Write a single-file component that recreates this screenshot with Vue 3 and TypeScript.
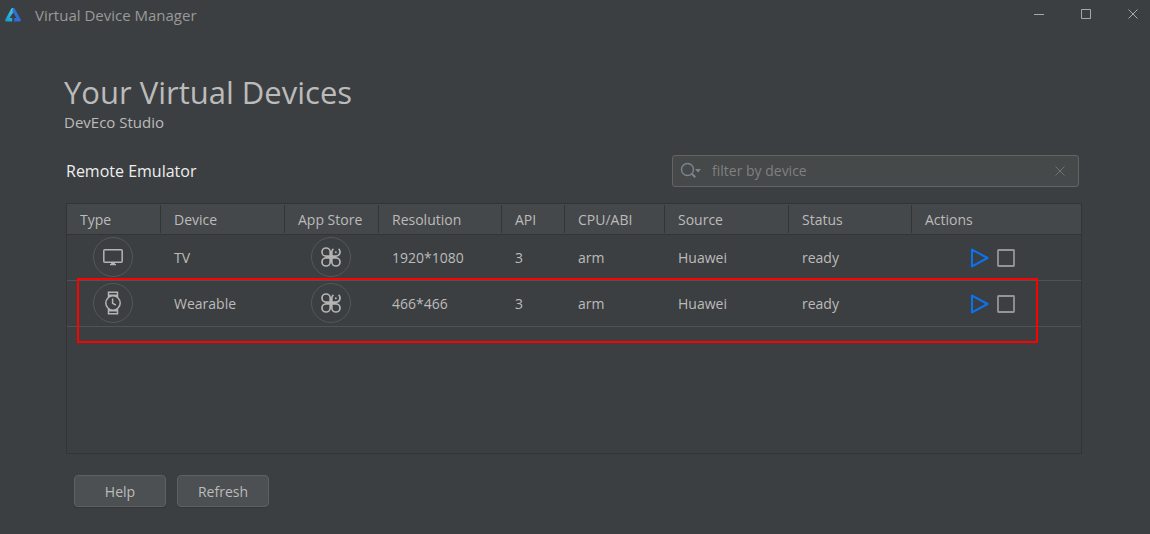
<script setup lang="ts">
import { ref } from 'vue'

interface Device {
  kind: 'tv' | 'watch'
  name: string
  resolution: string
  api: number
  abi: string
  source: string
  status: string
}

const filter = ref('')
const columns: { key: string; label: string }[] = [
  { key: 'type', label: 'Type' },
  { key: 'device', label: 'Device' },
  { key: 'store', label: 'App Store' },
  { key: 'resolution', label: 'Resolution' },
  { key: 'api', label: 'API' },
  { key: 'abi', label: 'CPU/ABI' },
  { key: 'source', label: 'Source' },
  { key: 'status', label: 'Status' },
  { key: 'actions', label: 'Actions' },
]
const devices: Device[] = [
  { kind: 'tv', name: 'TV', resolution: '1920*1080', api: 3, abi: 'arm', source: 'Huawei', status: 'ready' },
  { kind: 'watch', name: 'Wearable', resolution: '466*466', api: 3, abi: 'arm', source: 'Huawei', status: 'ready' },
]
</script>

<template>
  <div class="window">
    <header class="titlebar">
      <svg class="logo" width="16" height="14" viewBox="0 0 16 14" aria-hidden="true">
        <defs>
          <linearGradient id="logo-left" x1="0" y1="1" x2="1" y2="0">
            <stop offset="0" stop-color="#1590c8" />
            <stop offset="1" stop-color="#45d3ea" />
          </linearGradient>
        </defs>
        <path d="M6.2 .8Q6.8 0 8 0H9L9.4 2.4L4.6 10H7.2V13.6H1.6Q-.6 13.4 .4 11.2Z" fill="url(#logo-left)" />
        <path d="M8 0Q9.2 0 9.8 .8L15.6 11.2Q16.6 13.4 14.4 13.6H9.2V10H11.6L7.4 3.2Z" fill="#2f6fd6" />
      </svg>
      <span class="caption">Virtual Device Manager</span>
      <div class="controls">
        <button type="button" aria-label="Minimize">
          <svg width="11" height="11" viewBox="0 0 11 11"><path d="M0 5.5H10" /></svg>
        </button>
        <button type="button" aria-label="Maximize">
          <svg width="11" height="11" viewBox="0 0 11 11"><path d="M.5 .5H9.5V9.5H.5Z" /></svg>
        </button>
        <button type="button" aria-label="Close">
          <svg width="11" height="11" viewBox="0 0 11 11"><path d="M.5 .5L9.5 9.5M9.5 .5L.5 9.5" /></svg>
        </button>
      </div>
    </header>

    <main class="content">
      <h1>Your Virtual Devices</h1>
      <p class="product">DevEco Studio</p>

      <div class="toolbar">
        <h2>Remote Emulator</h2>
        <div class="search">
          <svg width="22" height="18" viewBox="0 0 22 18" aria-hidden="true">
            <circle cx="7.5" cy="7.5" r="6" fill="none" stroke="#7b858c" stroke-width="1.4" />
            <path d="M11.8 11.8L15.3 15.3" stroke="#7b858c" stroke-width="2" />
            <path d="M15 7H21L18 10.4Z" fill="#7b858c" />
          </svg>
          <input v-model="filter" type="text" placeholder="filter by device" aria-label="Filter by device" />
          <button type="button" aria-label="Clear filter" @click="filter = ''">
            <svg width="10" height="10" viewBox="0 0 10 10"><path d="M.5 .5L9.5 9.5M9.5 .5L.5 9.5" /></svg>
          </button>
        </div>
      </div>

      <div class="panel">
        <table>
          <colgroup>
            <col v-for="c in columns" :key="c.key" :class="'w-' + c.key" />
          </colgroup>
          <thead>
            <tr>
              <th v-for="c in columns" :key="c.key" scope="col">{{ c.label }}</th>
            </tr>
          </thead>
          <tbody>
            <tr v-for="d in devices" :key="d.name">
              <td class="icon-cell">
                <span class="disc">
                  <svg v-if="d.kind === 'tv'" width="20" height="18" viewBox="0 0 20 18" role="img" aria-label="TV">
                    <rect x=".8" y="1.8" width="18.4" height="12.4" rx="1" fill="none" stroke="#b4b4b4" stroke-width="1.5" />
                    <path d="M8.4 14.5H11.6L12 16H13V17.2H7V16H8Z" fill="#b4b4b4" />
                  </svg>
                  <svg v-else width="18" height="24" viewBox="0 0 18 24" fill="none" stroke="#b4b4b4" stroke-width="1.5" role="img" aria-label="Wearable">
                    <circle cx="9" cy="12" r="7.2" />
                    <path d="M4.5 6V1.2H13.5V6M4.5 18V22.8H13.5V18M5 4.2H13M5 19.8H13" />
                    <path d="M8.6 7.6V12.4L11.8 14" />
                  </svg>
                </span>
              </td>
              <td>{{ d.name }}</td>
              <td class="icon-cell">
                <span class="disc">
                  <svg width="20" height="20" viewBox="0 0 20 20" fill="none" stroke="#b4b4b4" stroke-width="1.7" role="img" aria-label="App Store">
                    <path d="M9.2 9.2H5A4.1 4.1 0 1 1 9.2 5Z" />
                    <path d="M9.2 10.8H5A4.1 4.1 0 1 0 9.2 15Z" />
                    <path d="M10.8 10.8H15A4.1 4.1 0 1 1 10.8 15Z" />
                    <path d="M12.4 1.8A4.2 4.2 0 0 0 10.8 5V9.2H15A4.2 4.2 0 0 0 17.6 1.9" />
                    <circle cx="14.8" cy="5.2" r="1" fill="#b4b4b4" stroke="none" />
                  </svg>
                </span>
              </td>
              <td>{{ d.resolution }}</td>
              <td>{{ d.api }}</td>
              <td>{{ d.abi }}</td>
              <td>{{ d.source }}</td>
              <td>{{ d.status }}</td>
              <td>
                <div class="actions">
                  <button type="button" :aria-label="'Start ' + d.name">
                    <svg width="20" height="20" viewBox="0 0 20 20">
                      <path d="M2 1.6L17.6 10L2 18.4Z" fill="none" stroke="#0a74f0" stroke-width="2" stroke-linejoin="round" />
                    </svg>
                  </button>
                  <button type="button" :aria-label="'Stop ' + d.name">
                    <svg width="18" height="18" viewBox="0 0 18 18">
                      <rect x="1" y="1" width="16" height="16" rx=".5" fill="none" stroke="#959595" stroke-width="1.8" />
                    </svg>
                  </button>
                </div>
              </td>
            </tr>
          </tbody>
        </table>
        <div class="highlight" aria-hidden="true"></div>
      </div>

      <div class="footer">
        <button type="button">Help</button>
        <button type="button">Refresh</button>
      </div>
    </main>
  </div>
</template>

<style>
body {
  margin: 0;
  background: #3c3f41;
}
</style>

<style scoped>
.window {
  box-sizing: border-box;
  display: flex;
  flex-direction: column;
  min-height: 100vh;
  background: #3c3f41;
  color: #bbbbbb;
  font: 14px/20px "Open Sans", "Noto Sans", sans-serif;
}
button {
  padding: 0;
  border: 0;
  background: none;
  color: inherit;
  font: inherit;
}
svg {
  display: block;
}
.titlebar {
  display: flex;
  align-items: center;
  height: 29px;
  padding: 0 11px 0 5px;
}
.caption {
  margin-left: 14px;
  color: #999999;
  font-size: 15px;
}
.controls {
  display: flex;
  gap: 36px;
  margin-left: auto;
}
.controls path {
  fill: none;
  stroke: #a8a8a8;
}
.content {
  display: flex;
  flex: 1;
  flex-direction: column;
  padding: 43px 68px 27px 66px;
}
h1 {
  margin: 0 0 0 -2px;
  font-size: 31px;
  font-weight: 400;
  line-height: 40px;
}
.product {
  margin: 0 0 0 -2px;
  font-size: 15px;
}
.toolbar {
  display: flex;
  align-items: center;
  justify-content: space-between;
  margin: 23px 3px 16px 0;
}
h2 {
  margin: 0;
  color: #eeeeee;
  font-size: 16px;
  font-weight: 400;
}
.search {
  box-sizing: border-box;
  display: flex;
  align-items: center;
  width: 407px;
  height: 32px;
  padding: 0 13px 0 7px;
  border: 1px solid #646464;
  border-radius: 3px;
  background: #45494a;
}
.search input {
  flex: 1;
  min-width: 0;
  margin-left: 10px;
  padding: 0;
  border: 0;
  outline: 0;
  background: none;
  color: #bbbbbb;
  font: inherit;
}
.search input::placeholder {
  color: #808080;
  opacity: 1;
}
.search button path {
  stroke: #6e7375;
}
.panel {
  position: relative;
  flex: 1;
  border: 1px solid #323435;
}
table {
  width: 100%;
  border-spacing: 0;
  table-layout: fixed;
}
.w-type,
.w-store {
  width: 94px;
}
.w-device,
.w-source {
  width: 124px;
}
.w-resolution,
.w-status {
  width: 123px;
}
.w-api {
  width: 63px;
}
.w-abi {
  width: 100px;
}
th {
  box-sizing: border-box;
  height: 31px;
  padding: 2px 0 0 13px;
  border-bottom: 1px solid #323435;
  background: linear-gradient(#323435, #323435) right center / 1px 28px no-repeat #45484a;
  font-weight: 400;
  text-align: left;
  white-space: nowrap;
}
th:last-child {
  background: #45484a;
}
td {
  box-sizing: border-box;
  height: 46px;
  padding: 0 0 0 13px;
  border-bottom: 1px solid #505355;
}
.icon-cell {
  padding: 0 0 2px 26px;
}
.disc {
  box-sizing: border-box;
  display: flex;
  align-items: center;
  justify-content: center;
  width: 40px;
  height: 40px;
  border: 1px solid #55585a;
  border-radius: 50%;
}
.actions {
  display: flex;
  align-items: center;
  gap: 7px;
  padding-left: 45px;
}
.highlight {
  position: absolute;
  top: 74px;
  right: 43px;
  left: 10px;
  box-sizing: border-box;
  height: 65px;
  border: 2px solid #ff0000;
}
.footer {
  display: flex;
  gap: 11px;
  margin: 21px 0 0 8px;
}
.footer button {
  box-sizing: border-box;
  width: 92px;
  height: 32px;
  padding-top: 2px;
  border: 1px solid #5e6162;
  border-radius: 4px;
  background: #4c5052;
  box-shadow: 0 1px 1px #35383a;
}
</style>
